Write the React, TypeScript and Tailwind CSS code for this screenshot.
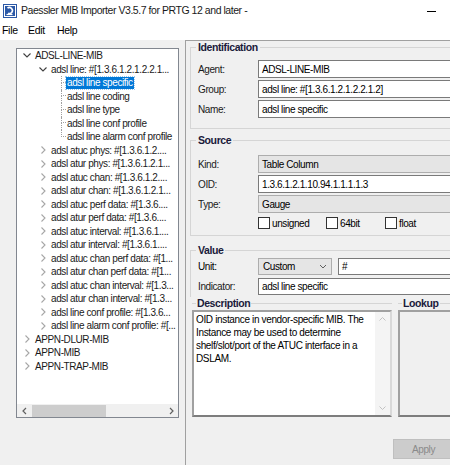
import React from 'react';

type Node = {
  label: string;
  level: number;
  open?: boolean;
  leaf?: boolean;
  selected?: boolean;
  lastChild?: boolean;
};

const tree: Node[] = [
  { label: 'ADSL-LINE-MIB', level: 0, open: true },
  { label: 'adsl line: #[1.3.6.1.2.1.2.2.1...', level: 1, open: true },
  { label: 'adsl line specific', level: 2, leaf: true, selected: true },
  { label: 'adsl line coding', level: 2, leaf: true },
  { label: 'adsl line type', level: 2, leaf: true },
  { label: 'adsl line conf profile', level: 2, leaf: true },
  { label: 'adsl line alarm conf profile', level: 2, leaf: true, lastChild: true },
  { label: 'adsl atuc phys: #[1.3.6.1.2....', level: 1 },
  { label: 'adsl atur phys: #[1.3.6.1.2.1...', level: 1 },
  { label: 'adsl atuc chan: #[1.3.6.1.2....', level: 1 },
  { label: 'adsl atur chan: #[1.3.6.1.2.1...', level: 1 },
  { label: 'adsl atuc perf data: #[1.3.6....', level: 1 },
  { label: 'adsl atur perf data: #[1.3.6....', level: 1 },
  { label: 'adsl atuc interval: #[1.3.6.1....', level: 1 },
  { label: 'adsl atur interval: #[1.3.6.1....', level: 1 },
  { label: 'adsl atuc chan perf data: #[1...', level: 1 },
  { label: 'adsl atur chan perf data: #[1...', level: 1 },
  { label: 'adsl atuc chan interval: #[1.3...', level: 1 },
  { label: 'adsl atur chan interval: #[1.3...', level: 1 },
  { label: 'adsl line conf profile: #[1.3.6...', level: 1 },
  { label: 'adsl line alarm conf profile: #[...', level: 1 },
  { label: 'APPN-DLUR-MIB', level: 0 },
  { label: 'APPN-MIB', level: 0 },
  { label: 'APPN-TRAP-MIB', level: 0 },
];

export default function App() {
  return (
    <div className="w-[450px] h-[465px] overflow-hidden bg-white font-['Liberation_Sans',Arial,sans-serif] text-[10px] tracking-[-0.4px] text-black flex flex-col">
      {/* title bar */}
      <div className="h-[22px] shrink-0 flex items-center pl-[3px]">
        <AppIcon />
        <span className="ml-[4px] text-[10.5px] tracking-[-0.45px] text-[#1a1a1a]">
          Paessler MIB Importer V3.5.7 for PRTG 12 and later -
        </span>
        <span className="ml-auto mr-[14px] w-[9px] h-px bg-black" />
      </div>

      {/* menu */}
      <div className="h-[18px] shrink-0 flex items-center pl-[2px] text-[10.5px] tracking-[-0.3px]">
        <span className="w-[26px]">File</span>
        <span className="w-[29px]">Edit</span>
        <span>Help</span>
      </div>

      <div className="flex h-[425px] bg-[#f0f0f0]">
        {/* tree */}
        <div className="w-[185px] shrink-0 pt-[8px] pl-[16px]">
          <div className="w-[163px] h-[370px] border border-[#828790] bg-white flex flex-col">
            <div className="flex-1 overflow-hidden">
              {tree.map((n, i) => (
                <TreeRow key={i} node={n} />
              ))}
            </div>
            <div className="h-[13px] shrink-0 flex items-center bg-[#f0f0f0]">
              <div className="w-[14px] flex justify-center">
                <svg width="5" height="8" viewBox="0 0 5 8">
                  <path d="M4 1L1 4l3 3" stroke="#606060" strokeWidth="1.2" fill="none" />
                </svg>
              </div>
              <div className="ml-[1px] w-[74px] h-[12px] bg-[#cdcdcd]" />
              <div className="ml-auto w-[14px] flex justify-center">
                <svg width="5" height="8" viewBox="0 0 5 8">
                  <path d="M1 1l3 3-3 3" stroke="#606060" strokeWidth="1.2" fill="none" />
                </svg>
              </div>
            </div>
          </div>
        </div>

        {/* detail */}
        <div className="flex-1 min-w-0 flex flex-col border-t border-l border-[#a0a0a0] overflow-hidden">
          <div className="h-[256px] shrink-0 overflow-hidden pl-[4px]">
            <div className="w-[300px]">
              <Group title="Identification" className="pt-[7px] pb-[10px]">
                <div className="flex flex-col gap-[2px]">
                  <Field label="Agent:" value="ADSL-LINE-MIB" />
                  <Field label="Group:" value="adsl line: #[1.3.6.1.2.1.2.2.1.2]" />
                  <Field label="Name:" value="adsl line specific" />
                </div>
              </Group>

              <Group title="Source" className="mt-[5px] pt-[9px] pb-[6px]">
                <div className="flex flex-col gap-[2px]">
                  <Field label="Kind:" value="Table Column" readOnly />
                  <Field label="OID:" value="1.3.6.1.2.1.10.94.1.1.1.1.3" />
                  <Field label="Type:" value="Gauge" readOnly />
                  <div className="flex items-center h-[12px] mt-[2px] pl-[60px]">
                    <Check label="unsigned" w="w-[68px]" />
                    <Check label="64bit" w="w-[59px]" />
                    <Check label="float" w="w-[50px]" />
                  </div>
                </div>
              </Group>

              <Group title="Value" className="mt-[8px] pt-[2px] pb-[6px]">
                <div className="flex flex-col gap-[3px]">
                  <div className="flex items-center h-[17px]">
                    <span className="w-[60px]">Unit:</span>
                    <div className="w-[74px] h-[17px] border border-[#adadad] bg-[#e5e5e5] flex items-center pl-[4px]">
                      <span>Custom</span>
                      <svg className="ml-auto mr-[4px]" width="8" height="5" viewBox="0 0 8 5">
                        <path d="M1 1l3 3 3-3" stroke="#606060" fill="none" />
                      </svg>
                    </div>
                    <div className="ml-[6px] flex-1 h-[17px] border border-[#7a7a7a] bg-white pl-[3px] flex items-center">
                      #
                    </div>
                  </div>
                  <Field label="Indicator:" value="adsl line specific" h="h-[17px]" />
                  <div className="flex items-center h-[17px]">
                    <span className="w-[60px]" />
                    <div className="w-[161px] h-[17px] border border-[#7a7a7a] bg-white" />
                    <div className="ml-[6px] flex-1 h-[17px] border border-[#adadad] bg-[#e5e5e5]" />
                  </div>
                </div>
              </Group>
            </div>
          </div>

          {/* description / lookup */}
          <div className="h-[122px] shrink-0 flex pl-[6px] overflow-hidden">
            <div className="w-[200px] shrink-0 flex flex-col">
              <div className="h-[13px] flex items-center">
                <span className="w-[4px] h-px bg-[#d5d5d5]" />
                <span className="font-bold px-[1px] text-[10.5px] text-[#1a1a3a]">Description</span>
                <span className="flex-1 h-px bg-[#d5d5d5]" />
              </div>
              <div className="h-[107px] flex border-2 border-t-[#a0a0a0] border-l-[#a0a0a0] border-b-[#7d7d7d] border-r-[#d8d8d8] bg-white">
                <div className="flex-1 pl-[2px] pt-[1px] leading-[13px] whitespace-nowrap text-[10px] tracking-[-0.35px]">
                  OID instance in vendor-specific MIB. The
                  <br />
                  Instance may be used to determine
                  <br />
                  shelf/slot/port of the ATUC interface in a
                  <br />
                  DSLAM.
                </div>
                <div className="w-[15px] bg-[#f4f4f4] flex flex-col items-center justify-between py-[5px]">
                  <svg width="7" height="4" viewBox="0 0 7 4">
                    <path d="M0.5 3.5l3-3 3 3" stroke="#c2c2c2" fill="none" />
                  </svg>
                  <svg width="7" height="4" viewBox="0 0 7 4">
                    <path d="M0.5 0.5l3 3 3-3" stroke="#c2c2c2" fill="none" />
                  </svg>
                </div>
              </div>
            </div>
            <div className="w-[6px] shrink-0" />
            <div className="flex-1 min-w-[80px] flex flex-col">
              <div className="h-[13px] flex items-center">
                <span className="w-[4px] h-px bg-[#d5d5d5]" />
                <span className="font-bold px-[1px] text-[10.5px] text-[#1a1a3a]">Lookup</span>
                <span className="flex-1 h-px bg-[#d5d5d5]" />
              </div>
              <div className="h-[107px] w-[80px] border-2 border-t-[#a0a0a0] border-l-[#a0a0a0] border-b-[#7d7d7d] border-r-[#d8d8d8] bg-[#f0f0f0]" />
            </div>
          </div>

          <div className="flex-1 pt-[20px] pl-[207px]">
            <div className="w-[70px] h-[20px] border border-[#bfbfbf] bg-[#cccccc] flex items-center pl-[18px] text-[#8a8a8a]">
              Apply
            </div>
          </div>
        </div>
      </div>
    </div>
  );
}

function AppIcon() {
  return (
    <svg width="14" height="14" viewBox="0 0 14 14">
      <rect x="0" y="0" width="14" height="14" fill="#2b58a6" />
      <rect x="1.5" y="1.5" width="11" height="11" fill="none" stroke="#ffffff" strokeWidth="1" />
      <path d="M4.5 4.2a3 3 0 1 1 0.6 5" stroke="#ffffff" strokeWidth="1.6" fill="none" />
      <path d="M3.5 10.5h6" stroke="#ffffff" strokeWidth="1.2" />
    </svg>
  );
}

function TreeRow({ node }: { node: Node }) {
  const pad = node.level === 0 ? 'pl-[4px]' : node.level === 1 ? 'pl-[20px]' : 'pl-[44px]';
  return (
    <div className={`h-[13.5px] flex items-center whitespace-nowrap ${pad}`}>
      {node.leaf ? (
        <div className="w-[5px] h-full flex flex-col">
          <div className="h-1/2 border-l border-b border-dotted border-[#a0a0a0]" />
          <div className={`h-1/2 ${node.lastChild ? '' : 'border-l border-dotted border-[#a0a0a0]'}`} />
        </div>
      ) : (
        <div className="w-[12px] flex justify-center">
          {node.open ? (
            <svg width="8" height="5" viewBox="0 0 8 5">
              <path d="M0.5 0.5l3.5 3.5 3.5-3.5" stroke="#404040" strokeWidth="1.1" fill="none" />
            </svg>
          ) : (
            <svg width="5" height="8" viewBox="0 0 5 8">
              <path d="M0.5 0.5l3.5 3.5-3.5 3.5" stroke="#a6a6a6" strokeWidth="1.1" fill="none" />
            </svg>
          )}
        </div>
      )}
      <span
        className={
          node.leaf
            ? node.selected
              ? 'bg-[#0078d7] text-white px-[1px] leading-[12px] outline outline-1 outline-dotted outline-[#99c9ef]'
              : 'px-[1px] text-[#1a1a1a]'
            : 'ml-[2px] text-[#1a1a1a]'
        }
      >
        {node.label}
      </span>
    </div>
  );
}

function Group({
  title,
  className,
  children,
}: {
  title: string;
  className?: string;
  children: React.ReactNode;
}) {
  return (
    <fieldset className={`border border-[#d5d5d5] pl-[7px] ${className ?? ''}`}>
      <legend className="-ml-[2px] px-[2px] font-bold leading-[12px] text-[10.5px] text-[#1a1a3a]">
        {title}
      </legend>
      {children}
    </fieldset>
  );
}

function Field({
  label,
  value,
  readOnly,
  h = 'h-[18px]',
}: {
  label: string;
  value: string;
  readOnly?: boolean;
  h?: string;
}) {
  return (
    <div className={`flex items-center ${h}`}>
      <span className="w-[60px] shrink-0 text-[#1a1a1a]">{label}</span>
      <div
        className={`flex-1 h-full flex items-center pl-[3px] border ${
          readOnly ? 'border-[#adadad] bg-[#e5e5e5]' : 'border-[#7a7a7a] bg-white'
        }`}
      >
        {value}
      </div>
    </div>
  );
}

function Check({ label, w }: { label: string; w: string }) {
  return (
    <div className={`flex items-center ${w}`}>
      <span className="w-[12px] h-[12px] border border-[#333333] bg-white" />
      <span className="ml-[2px]">{label}</span>
    </div>
  );
}
